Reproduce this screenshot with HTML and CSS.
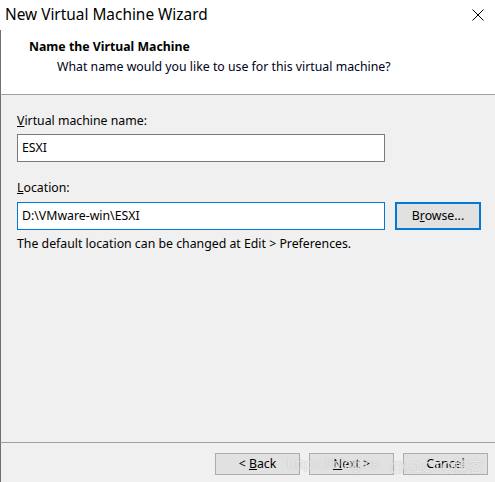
FILE: index.html
```html
<!DOCTYPE html>
<html>
<head>
<meta charset="utf-8">
<link rel="stylesheet" href="styles.css">
</head>
<body>
<div class="window">
  <div class="titlebar">
    <span class="title">New Virtual Machine Wizard</span>
    <svg class="close" width="12" height="12" viewBox="0 0 12 12"><path d="M0.5 0.5 L11.5 11.5 M11.5 0.5 L0.5 11.5" stroke="#000" stroke-width="1" fill="none"/></svg>
  </div>
  <div class="header">
    <div class="heading">Name the Virtual Machine</div>
    <div class="subheading">What name would you like to use for this virtual machine?</div>
  </div>
  <div class="content">
    <label class="label first"><u>V</u>irtual machine name:</label>
    <div class="row">
      <div class="input">ESXI</div>
    </div>
    <label class="label second"><u>L</u>ocation:</label>
    <div class="row">
      <div class="input focused">D:\VMware-win\ESXI</div>
      <button class="btn browse">B<u>r</u>owse...</button>
    </div>
    <div class="note">The default location can be changed at Edit &gt; Preferences.</div>
  </div>
  <div class="footer">
    <button class="btn"><span class="lt">&lt;</span> <u>B</u>ack</button>
    <button class="btn"><u>N</u>ext <span class="lt">&gt;</span></button>
    <button class="btn">Cancel</button>
    <span class="wm wm1">https://blog.cs</span>
    <span class="wm wm2">@51CTO博客</span>
  </div>
</div>
</body>
</html>
```
FILE: styles.css
```css
html, body {
  margin: 0;
  padding: 0;
  background: #f0f0f0;
}
body {
  font-family: "Noto Sans", "Liberation Sans", "Noto Sans CJK SC", sans-serif;
  font-size: 12.3px;
  color: #000;
}
.window {
  width: 495px;
  height: 482px;
  display: flex;
  flex-direction: column;
  overflow: hidden;
}
.titlebar {
  height: 30px;
  flex: none;
  background: #fff;
  display: flex;
  align-items: center;
  justify-content: space-between;
  padding: 0 11px 0 5px;
  box-sizing: border-box;
}
.title {
  font-size: 15.4px;
  color: #000;
  margin-top: -1px;
}
.close {
  display: block;
  margin-top: -1px;
}
.header {
  height: 65px;
  flex: none;
  box-sizing: border-box;
  background: #fff;
  border-left: 1px solid #707070;
  border-bottom: 1px solid #a0a0a0;
  padding: 9px 0 0 28px;
}
.heading {
  font-weight: bold;
  line-height: 16px;
}
.subheading {
  line-height: 16px;
  margin-top: 4px;
  padding-left: 28px;
  color: #000020;
}
.content {
  flex: 1;
  border-left: 1px solid #707070;
  padding: 18px 0 0 16px;
  display: flex;
  flex-direction: column;
  align-items: flex-start;
}
.label {
  display: block;
  line-height: 16px;
}
.label.first { margin-bottom: 5px; }
.label.second { margin-top: 18px; margin-bottom: 6px; }
.row {
  display: flex;
  align-items: stretch;
  gap: 10px;
}
.input {
  width: 368px;
  height: 28px;
  box-sizing: border-box;
  background: #fff;
  border: 1px solid #7a7a7a;
  padding: 0 4px;
  line-height: 26px;
}
.input.focused {
  border-color: #0078d7;
}
.btn {
  font-family: inherit;
  font-size: 12.3px;
  color: #000;
  background: #e1e1e1;
  border: 1px solid #adadad;
  width: 85px;
  height: 22px;
  padding: 0;
  margin: 0;
  box-sizing: border-box;
  line-height: 18px;
}
.btn.browse {
  height: 28px;
  width: 86px;
  border: 2px solid #0078d7;
}
.note {
  margin-top: 6px;
  line-height: 16px;
}
.footer {
  position: relative;
  height: 40px;
  flex: none;
  box-sizing: border-box;
  border-left: 1px solid #707070;
  border-top: 1px solid #a0a0a0;
  padding: 10px 7px 0 0;
  display: flex;
  justify-content: flex-end;
  align-items: flex-start;
  gap: 9px;
}
.wm {
  position: absolute;
  top: 12px;
  font-family: "Liberation Sans", "Noto Sans CJK SC", sans-serif;
  font-size: 15px;
  color: rgba(255, 255, 255, 0.7);
  text-shadow: 0 0 1px rgba(150, 150, 150, 0.7);
  pointer-events: none;
  white-space: nowrap;
}
.wm1 { left: 286px; }
.wm2 { left: 389px; }
```
